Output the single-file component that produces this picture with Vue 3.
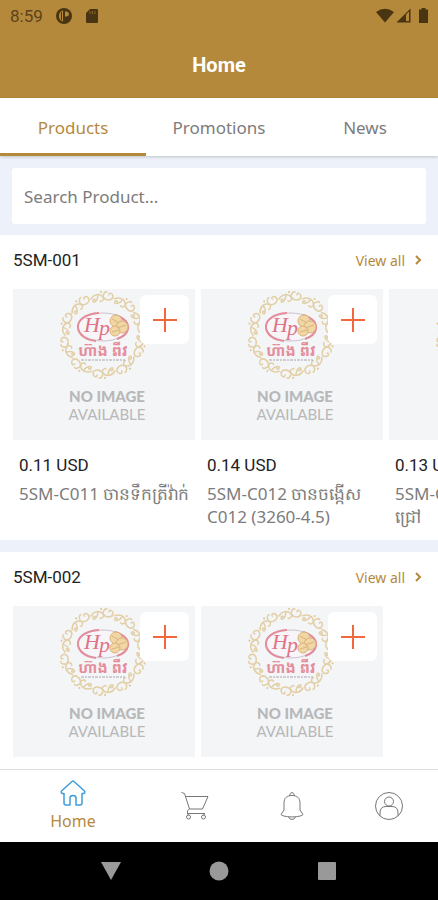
<script setup>
import { ref } from 'vue'

const tabs = ['Products', 'Promotions', 'News']
const activeTab = ref('Products')
const search = ref('')

const categories = [
  {
    name: '5SM-001',
    products: [
      { id: 1, price: '0.11 USD', name: '5SM-C011 ចានទឹកត្រីវ៉ាក់' },
      { id: 2, price: '0.14 USD', name: '5SM-C012 ចានចង្កើស C012 (3260-4.5)' },
      { id: 3, price: '0.13 USD', name: '5SM-C013\nជ្រៅ' }
    ]
  },
  {
    name: '5SM-002',
    products: [
      { id: 4, price: '0.11 USD', name: '5SM-C021' },
      { id: 5, price: '0.14 USD', name: '5SM-C022' }
    ]
  }
]

// angles of the scrolls around the logo
const scrolls = Array.from({ length: 10 }, (_, i) => i * 36)
</script>

<template>
  <div class="app">
    <header class="header">
      <div class="status">
        <span class="time">8:59</span>
        <svg class="status-icon" width="18" height="18" viewBox="0 0 18 18">
          <circle cx="9" cy="9" r="8" fill="#4a3512" />
          <path d="M8 3.500v11Q4 13.500 4 9T8 3.500z" fill="#b5893b" />
          <path d="M6.500 5v8" stroke="#4a3512" stroke-width="1" />
          <path d="M10 4.500h1.500a2.500 2.500 0 0 1 0 5H10z" fill="#b5893b" />
        </svg>
        <svg class="status-icon" width="14" height="16" viewBox="0 0 14 16">
          <path d="M5 1h7a1 1 0 0 1 1 1v12a1 1 0 0 1-1 1H2a1 1 0 0 1-1-1V5z" fill="#4a3512" />
          <path d="M5 3v3M7.500 3v3M10 3v3" stroke="#8a672b" stroke-width="1" />
        </svg>
        <span class="spacer"></span>
        <svg width="54" height="18" viewBox="0 0 54 18">
          <path d="M0 5Q9 -1.500 18 5L9 15.500z" fill="#4a3512" />
          <path d="M20.500 15.500 34.500 1.500v14z" fill="#4a3512" />
          <path d="M30 7.500 33 4.500v9.500h-3z" fill="#b5893b" />
          <path d="M43 2.500h2.500V1h4v1.500H52V16h-9z" fill="#4a3512" />
        </svg>
      </div>
      <h1>Home</h1>
    </header>

    <nav class="tabs">
      <button
        v-for="tab in tabs"
        :key="tab"
        :class="{ active: tab === activeTab }"
        @click="activeTab = tab"
      >
        {{ tab }}
      </button>
    </nav>

    <main>
      <div class="search">
        <input v-model="search" type="text" aria-label="Search Product" placeholder="Search Product..." />
      </div>

      <section v-for="category in categories" :key="category.name">
        <div class="section-head">
          <h2>{{ category.name }}</h2>
          <a href="#">
            View all
            <svg width="8" height="10" viewBox="0 0 8 10">
              <path d="M2 1l4 4-4 4" fill="none" stroke="currentColor" stroke-width="2" />
            </svg>
          </a>
        </div>
        <div class="products">
          <article v-for="product in category.products" :key="product.id" class="card">
            <div class="photo">
              <svg class="logo" width="90" height="90" viewBox="-45 -45 90 90">
                <g fill="none" stroke="#e3cfa6" stroke-width="1.500" stroke-linecap="round">
                  <g v-for="angle in scrolls" :key="angle" :transform="`rotate(${angle})`">
                    <path d="M-12 -36C-9 -41 -3 -42 0 -38C3 -34 9 -34 10 -38C10 -42 6 -43 6 -40" />
                    <path d="M-5 -40C-5 -34 -10 -31 -10 -34C-10 -36 -8 -36 -8 -35" />
                    <path d="M0 -38C0 -42 3 -44 4 -43M1 -37C0 -34 -2 -33 -3 -34" />
                    <circle cx="-2" cy="-43" r="1" fill="#dfc592" stroke="none" />
                  </g>
                </g>
                <ellipse cy="-8" rx="25" ry="14" fill="#f7f5f7" stroke="#cdc3cc" stroke-width="1" />
                <path d="M-4 -22C-19 -21 -26 -14 -25 -7C-24 0 -17 5 -7 6M12 -20C21 -17 26 -12 25 -6C24 -1 20 2 14 4" fill="none" stroke="#e48b9c" stroke-width="2" />
                <g fill="#f1d6a6" stroke="#d9b47a" stroke-width="1">
                  <circle cx="13" cy="-14" r="6" />
                  <circle cx="19" cy="-8" r="6" />
                  <circle cx="12" cy="-4" r="5" />
                  <path d="M9 -16l7 4M14 -7l9 -3M9 -3l7 -2" fill="none" />
                </g>
                <text class="monogram" x="-19" y="-3">H</text>
                <text class="monogram" x="-4" y="0">p</text>
                <text class="khmer" x="0" y="21" text-anchor="middle">ហ៊ាង ពីវ</text>
                <path d="M-22 25H22" stroke="#a9a5ab" stroke-width="1" stroke-dasharray="3 1 2 1" />
              </svg>
              <strong>NO IMAGE</strong>
              <span>AVAILABLE</span>
              <button class="add" :aria-label="`Add ${product.name}`">
                <svg width="24" height="24" viewBox="0 0 24 24">
                  <path d="M12 0v24M0 12h24" stroke="#f0683c" stroke-width="2" />
                </svg>
              </button>
            </div>
            <p class="price">{{ product.price }}</p>
            <p class="name">{{ product.name }}</p>
          </article>
        </div>
      </section>
    </main>

    <nav class="bottom">
      <a href="#" class="home">
        <svg width="26" height="26" viewBox="0 0 26 26" fill="none" stroke="#3d9ddb" stroke-width="1.500" stroke-linejoin="round">
          <path d="M12 1.500 1.500 11Q0.500 14 4 13.500V23Q4 25 6 25H10V18Q10 15.500 13 15.500T16 18V25H20Q22 25 22 23V13.500Q25.500 14 24.500 11L14 1.500Q13 0.500 12 1.500z" />
        </svg>
        Home
      </a>
      <a href="#" aria-label="Cart">
        <svg width="28" height="28" viewBox="0 0 28 28" fill="none" stroke="#777" stroke-width="1">
          <path d="M0.500 0.500 3.500 1.500 8.500 17H21.500L27 4.500H4.500M8.500 17Q5.500 18 6.500 21.500H24" />
          <path d="M7 21.500v2M23 21.500v2" />
          <circle cx="7.500" cy="25" r="2" />
          <circle cx="22.500" cy="25" r="2" />
        </svg>
      </a>
      <a href="#" aria-label="Notifications">
        <svg width="24" height="28" viewBox="0 0 24 28" fill="none" stroke="#777" stroke-width="1">
          <path d="M4 18V11C4 6 7 3.500 12 3.500S20 6 20 11V18L23 22.500Q22 24.500 12 25Q2 24.500 1 22.500z" />
          <path d="M9.500 4Q10 0.500 12 0.500T14.500 4M8.500 25Q9.500 27.500 12 27.500T15.500 25" />
        </svg>
      </a>
      <a href="#" aria-label="Account">
        <svg width="28" height="28" viewBox="0 0 28 28" fill="none" stroke="#777" stroke-width="1">
          <circle cx="14" cy="14" r="13.500" />
          <circle cx="14" cy="9.500" r="4.500" />
          <path d="M5 24V21Q5 14.500 11 14.500H17Q23 14.500 23 21V24" />
        </svg>
      </a>
    </nav>

    <div class="system">
      <button aria-label="Back">
        <svg width="22" height="20" viewBox="0 0 22 20"><path d="M1 1h20L11 19z" fill="#999" /></svg>
      </button>
      <button aria-label="Home screen">
        <svg width="20" height="20" viewBox="0 0 20 20"><circle cx="10" cy="10" r="9.500" fill="#999" /></svg>
      </button>
      <button aria-label="Recent apps">
        <svg width="20" height="20" viewBox="0 0 20 20"><rect x="1" y="1" width="18" height="18" rx="1" fill="#999" /></svg>
      </button>
    </div>
  </div>
</template>

<style>
body {
  margin: 0;
}
</style>

<style scoped>
.app {
  display: flex;
  flex-direction: column;
  height: 100vh;
  overflow: hidden;
  background: #edf2fa;
  color: #7c7c7c;
  font-family: "Noto Sans", "Open Sans", sans-serif;
}

h1,
h2,
p {
  margin: 0;
}

button {
  padding: 0;
  border: 0;
  background: none;
  font: inherit;
  color: inherit;
  cursor: pointer;
}

a {
  color: inherit;
  text-decoration: none;
}

svg {
  display: block;
}

.header {
  flex: none;
  background: #b5893b;
  font-family: Roboto, sans-serif;
}

.status {
  display: flex;
  align-items: center;
  height: 32px;
  padding: 0 8px 0 10px;
}

.time {
  color: #5c431a;
  font-size: 17px;
}

.status-icon {
  margin-left: 12px;
}

.spacer {
  flex: 1;
}

h1 {
  color: #fff;
  font-size: 20px;
  font-weight: 700;
  line-height: 66px;
  text-align: center;
}

.tabs {
  position: relative;
  z-index: 1;
  display: flex;
  flex: none;
  background: #fff;
  box-shadow: 0 1px 3px rgba(0, 0, 0, 0.2);
}

.tabs button {
  flex: 1;
  height: 58px;
  border-top: 3px solid transparent;
  border-bottom: 3px solid transparent;
  font-size: 17px;
}

.tabs .active {
  border-bottom-color: #b5893b;
  color: #b5893b;
}

main {
  flex: 1;
  min-height: 0;
  overflow-y: auto;
  scrollbar-width: none;
}

.search {
  padding: 12px 12px 11px;
}

.search input {
  box-sizing: border-box;
  width: 100%;
  height: 56px;
  padding: 0 12px;
  border: 0;
  border-radius: 3px;
  outline: none;
  background: #fff;
  color: #555;
  font: inherit;
  font-size: 17px;
}

.search input::placeholder {
  color: #7c7c7c;
}

section {
  padding-bottom: 12px;
  margin-bottom: 12px;
  background: #fff;
}

.section-head {
  display: flex;
  align-items: center;
  justify-content: space-between;
  height: 50px;
  padding: 0 16px 0 13px;
}

h2 {
  color: #222;
  font-family: Roboto, sans-serif;
  font-size: 17px;
  font-weight: 400;
}

.section-head a {
  display: flex;
  align-items: center;
  gap: 9px;
  color: #b5893b;
  font-size: 14px;
}

.products {
  display: flex;
  gap: 6px;
  padding: 4px 13px 0;
  overflow-x: auto;
  scrollbar-width: none;
}

.card {
  flex: 0 0 182px;
}

.photo {
  position: relative;
  display: flex;
  flex-direction: column;
  align-items: center;
  height: 151px;
  padding-left: 6px;
  box-sizing: border-box;
  background: #f3f5f7;
  color: #b8b8b9;
  font-family: Lato, sans-serif;
  font-size: 15px;
  line-height: 18px;
}

.logo {
  margin: 1px 8px 7px 0;
}

.photo strong {
  font-weight: 900;
}

.monogram {
  fill: #e07387;
  font-family: "Liberation Serif", serif;
  font-size: 22px;
  font-style: italic;
}

.khmer {
  fill: #e58c9b;
  font-family: "Noto Sans Khmer", "Noto Sans", sans-serif;
  font-size: 15px;
  font-weight: 700;
}

.add {
  position: absolute;
  top: 6px;
  right: 6px;
  display: grid;
  place-items: center;
  width: 49px;
  height: 49px;
  border-radius: 6px;
  background: #fff;
}

.price {
  padding: 14px 6px 0;
  color: #222;
  font-family: Roboto, sans-serif;
  font-size: 17px;
  line-height: 23px;
}

.name {
  min-height: 46px;
  padding: 5px 0 0 6px;
  font-size: 17px;
  line-height: 23px;
  white-space: pre-line;
}

.bottom {
  display: flex;
  flex: none;
  height: 72px;
  border-top: 1px solid #ddd;
  background: #fff;
}

.bottom a {
  display: flex;
  flex: 2;
  flex-direction: column;
  align-items: center;
  justify-content: center;
}

.bottom .home {
  flex: 3;
  gap: 4px;
  color: #b5893b;
  font-size: 16px;
  line-height: 22px;
}

.system {
  display: flex;
  flex: none;
  height: 58px;
  padding: 0 13%;
  background: #000;
}

.system button {
  display: grid;
  flex: 1;
  place-items: center;
}
</style>
